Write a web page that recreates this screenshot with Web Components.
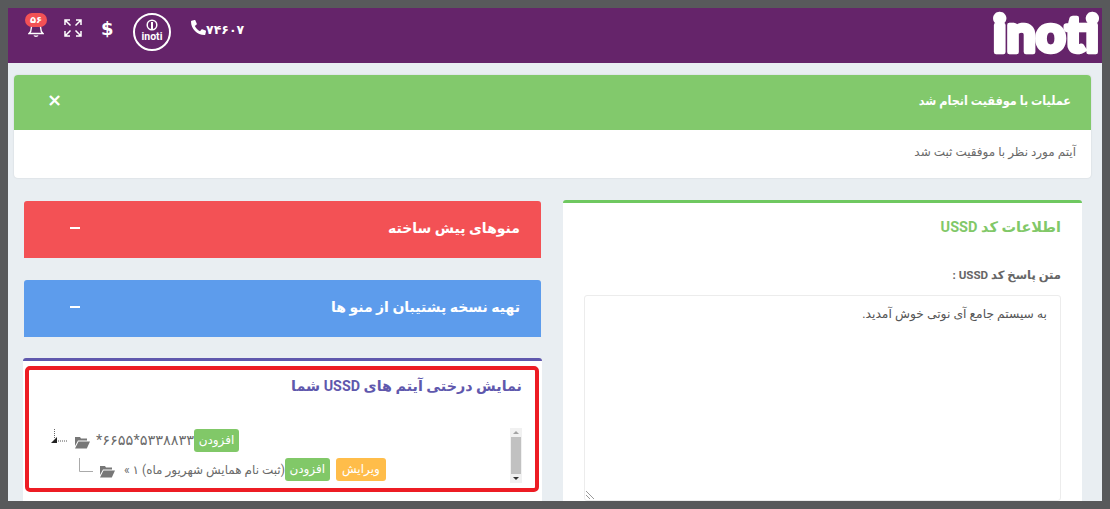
<!DOCTYPE html>
<html lang="fa">
<head>
<meta charset="utf-8">
<title>USSD</title>
<style>
html, body { margin: 0; height: 509px; overflow: hidden; }
body {
    box-sizing: border-box;
    padding: 8px;
    background: #58595b;
    font-family: Roboto, "DejaVu Sans", sans-serif;
}
</style>
</head>
<body>
<app-frame>
    <top-bar></top-bar>
    <alert-box heading="عملیات با موفقیت انجام شد">آیتم مورد نظر با موفقیت ثبت شد</alert-box>
    <two-columns>
        <div slot="left">
            <fold-panel color="#f35155" heading="منوهای پیش ساخته"></fold-panel>
            <fold-panel color="#5d9cec" heading="تهیه نسخه پشتیبان از منو ها"></fold-panel>
            <tree-card heading="نمایش درختی آیتم های USSD شما">
                <tree-row level="0" label="*۶۶۵۵*۵۳۳۸۸۳۳" actions="افزودن"></tree-row>
                <tree-row level="1" label="(ثبت نام همایش شهریور ماه) ۱ »" actions="افزودن,ویرایش"></tree-row>
            </tree-card>
        </div>
        <ussd-form slot="right"></ussd-form>
    </two-columns>
</app-frame>

<script>
class AppFrame extends HTMLElement {
    constructor() {
        super();
        this.shadowDOM = this.attachShadow({mode: "open"});
    }
    connectedCallback() {
        this.shadowDOM.innerHTML = `
        <style>
        :host {
            display: block;
            width: 1094px;
            height: 493px;
            background: #e9eef2;
        }
        </style>
        <slot></slot>`;
    }
}

class TopBar extends HTMLElement {
    constructor() {
        super();
        this.shadowDOM = this.attachShadow({mode: "open"});
    }
    connectedCallback() {
        this.shadowDOM.innerHTML = `
        <style>
        :host {
            display: flex;
            align-items: flex-start;
            height: 55px;
            background: #65246a;
            color: #fff;
            font-family: Roboto, "DejaVu Sans", sans-serif;
        }
        .bell { position: relative; margin: 10px 0 0 20px; width: 16px; height: 20px; }
        .badge {
            position: absolute;
            left: -3px;
            top: -5px;
            width: 22px;
            height: 14px;
            border-radius: 7px;
            background: #f35155;
            font: bold 10px/14px "DejaVu Sans", sans-serif;
            text-align: center;
        }
        .expand { margin: 11px 0 0 20px; }
        .dollar { margin: 9px 0 0 19px; width: 12px; font: bold 18px/24px "DejaVu Sans", sans-serif; text-align: center; }
        .round {
            box-sizing: border-box;
            margin: 5px 0 0 20px;
            width: 38px;
            height: 38px;
            border: 2px solid #fff;
            border-radius: 50%;
            display: flex;
            flex-direction: column;
            align-items: center;
            font: bold 10.500px/11px Roboto, sans-serif;
        }
        .round svg { margin-top: 4px; }
        .phone { margin: 12px 0 0 20px; }
        .tel { margin: 13px 0 0 0; font: bold 12.500px/18px "DejaVu Sans", sans-serif; }
        .logo { margin-left: auto; display: block; overflow: visible; }
        .logo text { font: 900 52px Lato, sans-serif; }
        </style>
        <div class="bell">
            <svg width="16" height="20" viewBox="0 0 16 20" fill="none" stroke="#fff" stroke-width="1.400">
                <path d="M1 15.500c2-1.500 2.300-3 2.300-5.500 0-2.500 2-4 4.700-4s4.700 1.500 4.700 4c0 2.500.3 4 2.300 5.500z"/>
                <path d="M6 17.500c.6 1 3.400 1 4 0"/>
            </svg>
            <div class="badge">۵۶</div>
        </div>
        <svg class="expand" width="18" height="18" viewBox="0 0 18 18" fill="none" stroke="#fff" stroke-width="1.500">
            <path d="M1 6V1h5M1 1l5.500 5.500M12 1h5v5M17 1l-5.500 5.500M1 12v5h5M1 17l5.500-5.500M12 17h5v-5M17 17l-5.500-5.500"/>
        </svg>
        <div class="dollar">$</div>
        <div class="round">
            <svg width="12" height="12" viewBox="0 0 12 12" fill="none" stroke="#fff" stroke-width="1.500">
                <circle cx="6" cy="6" r="4.800"/><path d="M6 3v7" stroke-width="2"/>
            </svg>
            <span>inoti</span>
        </div>
        <svg class="phone" width="15" height="15" viewBox="0 0 512 512" fill="#fff">
            <path transform="matrix(-1 0 0 1 512 0)" d="M493.400 24.600l-104-24c-11.300-2.600-22.900 3.300-27.500 13.900l-48 112c-4.200 9.800-1.400 21.300 6.900 28l60.600 49.600c-36 76.700-98.900 140.500-177.200 177.200l-49.600-60.600c-6.800-8.300-18.200-11.100-28-6.900l-112 48C3.900 366.500-2 378.100.6 389.400l24 104C27.100 504.200 36.700 512 48 512c256.100 0 464-207.500 464-464 0-11.200-7.700-20.900-18.600-23.400z"/>
        </svg>
        <div class="tel">۷۴۶۰۷</div>
        <svg class="logo" width="110" height="55" viewBox="0 0 110 55">
            <text x="1" y="43.500" fill="#fff" stroke="#fff" stroke-width="4.500" stroke-linejoin="round" textLength="106" lengthAdjust="spacingAndGlyphs">inoti</text>
        </svg>`;
    }
}

class AlertBox extends HTMLElement {
    constructor() {
        super();
        this.shadowDOM = this.attachShadow({mode: "open"});
    }
    connectedCallback() {
        this.shadowDOM.innerHTML = `
        <style>
        :host {
            display: block;
            margin: 12px 11px 22px 6px;
            background: #fff;
            border-radius: 4px;
            overflow: hidden;
            box-shadow: 0 0 2px rgba(0,0,0,.12);
            font-family: Roboto, "DejaVu Sans", sans-serif;
        }
        header {
            display: flex;
            align-items: center;
            justify-content: space-between;
            box-sizing: border-box;
            height: 55px;
            padding: 0 20px 5px 34px;
            background: #82c96c;
            color: #fff;
        }
        h3 { margin: 0; font: bold 12.500px "DejaVu Sans Condensed", "DejaVu Sans", sans-serif; font-stretch: condensed; word-spacing: -1px; direction: rtl; }
        .close { font: bold 18px/18px "DejaVu Sans", sans-serif; margin-left: -1px; }
        p {
            margin: 0;
            height: 48px;
            padding: 0 15px;
            direction: rtl;
            font-size: 12px;
            line-height: 44px;
            color: #6a6a6a;
        }
        </style>
        <header><span class="close">×</span><h3>${this.getAttribute("heading")}</h3></header>
        <p><slot></slot></p>`;
    }
}

class TwoColumns extends HTMLElement {
    constructor() {
        super();
        this.shadowDOM = this.attachShadow({mode: "open"});
    }
    connectedCallback() {
        this.shadowDOM.innerHTML = `
        <style>
        :host {
            display: grid;
            grid-template-columns: 519px 519px;
            column-gap: 21px;
            padding: 0 20px 0 15px;
            align-items: start;
        }
        </style>
        <slot name="left"></slot>
        <slot name="right"></slot>`;
    }
}

class FoldPanel extends HTMLElement {
    constructor() {
        super();
        this.shadowDOM = this.attachShadow({mode: "open"});
    }
    connectedCallback() {
        const color = this.getAttribute("color");
        this.shadowDOM.innerHTML = `
        <style>
        :host {
            display: flex;
            align-items: center;
            justify-content: space-between;
            box-sizing: border-box;
            height: 57px;
            margin: 1px 1px 22px;
            padding: 0 21px 3px 46px;
            border-radius: 3px 3px 0 0;
            background: ${color};
            color: #fff;
            font-family: Roboto, "DejaVu Sans", sans-serif;
        }
        h3 { margin: 0; font-size: 14px; font-weight: bold; direction: rtl; }
        .dash { width: 10px; height: 2px; background: #fff; }
        </style>
        <span class="dash"></span><h3>${this.getAttribute("heading")}</h3>`;
    }
}

class TreeCard extends HTMLElement {
    constructor() {
        super();
        this.shadowDOM = this.attachShadow({mode: "open"});
    }
    connectedCallback() {
        this.shadowDOM.innerHTML = `
        <style>
        :host {
            display: block;
            position: relative;
            box-sizing: border-box;
            height: 143px;
            margin-top: -1px;
            background: #fff;
            border-top: 3px solid #5f58ad;
            border-radius: 3px 3px 0 0;
            font-family: Roboto, "DejaVu Sans", sans-serif;
        }
        h3 {
            margin: 0;
            padding: 15px 20px 0 0;
            direction: rtl;
            font-size: 14.300px;
            line-height: 20px;
            font-weight: bold;
            color: #5f58ad;
        }
        .box {
            display: flex;
            justify-content: space-between;
            margin: 32px 20px 0 27px;
            height: 55px;
        }
        .rows { padding-top: 1px; }
        .bar {
            width: 12px;
            height: 55px;
            background: #f1f1f1;
            display: flex;
            flex-direction: column;
            align-items: center;
            justify-content: space-between;
        }
        .arrow { width: 0; height: 0; border: 3px solid transparent; margin: 3px 0; }
        .up { border-bottom-color: #a3a3a3; border-top: 0; }
        .down { border-top-color: #333; border-bottom: 0; }
        .thumb { width: 10px; flex: 1; background: #c1c1c1; margin: 0 1px; }
        /* annotation drawn on top of the card */
        .mark {
            position: absolute;
            left: 2px;
            right: 3px;
            top: 5px;
            height: 126px;
            box-sizing: border-box;
            border: 4px solid #ed1c24;
            border-radius: 5px;
            pointer-events: none;
        }
        </style>
        <h3>${this.getAttribute("heading")}</h3>
        <div class="box">
            <div class="rows"><slot></slot></div>
            <div class="bar"><i class="arrow up"></i><div class="thumb"></div><i class="arrow down"></i></div>
        </div>
        <div class="mark"></div>`;
    }
}

class TreeRow extends HTMLElement {
    constructor() {
        super();
        this.shadowDOM = this.attachShadow({mode: "open"});
    }
    connectedCallback() {
        const level = Number(this.getAttribute("level"));
        const line = level === 0
            ? `<svg class="line" width="24" height="24" viewBox="0 0 24 24">
                 <path d="M4.500 0v10" stroke="#666" stroke-dasharray="1 1" fill="none"/>
                 <path d="M8 12h9" stroke="#555" stroke-dasharray="1 1" fill="none"/>
                 <path d="M1 14l6-6v6z" fill="#222"/>
               </svg>`
            : `<svg class="line" width="24" height="24" viewBox="0 0 24 24">
                 <path d="M4.500 0v13.500H18" stroke="#aaa" fill="none"/>
               </svg>`;
        const buttons = this.getAttribute("actions").split(",").map(name => {
            const edit = name === "ویرایش";
            return `<action-tag color="${edit ? "#ffbd4a" : "#81c868"}" pad="${edit ? 6.5 : 4.5}">${name}</action-tag>`;
        }).join("");
        this.shadowDOM.innerHTML = `
        <style>
        :host {
            display: flex;
            align-items: center;
            height: 23px;
            margin-bottom: 6px;
            margin-left: ${level * 25}px;
            font-family: Roboto, "DejaVu Sans", sans-serif;
            font-size: 12px;
            color: #6a6a6a;
        }
        .line { flex: none; }
        .folder { flex: none; margin: 3px ${level ? 9 : 6}px 0 0; }
        bdi { white-space: nowrap; ${level ? "" : "font-size: 14.500px;"} }
        </style>
        ${line}
        <svg class="folder" width="16" height="13" viewBox="0 0 16 13">
            <path fill="#777" d="M1 1h5l1 1.500h6v2H4L1 10z"/>
            <path fill="#777" d="M4.500 5.500H16L12.800 12.500H1z"/>
        </svg>
        <bdi dir="${level ? "rtl" : "ltr"}">${this.getAttribute("label")}</bdi>
        ${buttons}`;
    }
}

class ActionTag extends HTMLElement {
    constructor() {
        super();
        this.shadowDOM = this.attachShadow({mode: "open"});
    }
    connectedCallback() {
        this.shadowDOM.innerHTML = `
        <style>
        :host {
            display: block;
            flex: none;
            height: 23px;
            padding: 0 ${this.getAttribute("pad")}px;
            margin-right: 6px;
            border-radius: 3px;
            background: ${this.getAttribute("color")};
            color: #fff;
            font-size: 12px;
            line-height: 22px;
            direction: rtl;
        }
        :host(:last-child) { margin-right: 0; }
        </style>
        <slot></slot>`;
    }
}

class UssdForm extends HTMLElement {
    constructor() {
        super();
        this.shadowDOM = this.attachShadow({mode: "open"});
    }
    connectedCallback() {
        this.shadowDOM.innerHTML = `
        <style>
        :host {
            display: block;
            box-sizing: border-box;
            height: 301px;
            padding: 15px 21px 0;
            background: #fff;
            border-top: 3px solid #6fc860;
            border-radius: 3px 3px 0 0;
            direction: rtl;
            font-family: Roboto, "DejaVu Sans", sans-serif;
        }
        h3 { margin: 0; font-size: 14.500px; line-height: 20px; font-weight: bold; color: #81c868; }
        label { display: block; margin-top: 27px; font-size: 11.600px; line-height: 20px; font-weight: bold; color: #666; }
        .area {
            position: relative;
            box-sizing: border-box;
            height: 206px;
            margin-top: 10px;
            padding: 10px 13px;
            border: 1px solid #ececec;
            border-radius: 3px;
            font-size: 12.300px;
            line-height: 16px;
            color: #555;
        }
        .grip { position: absolute; left: 1px; bottom: 1px; }
        </style>
        <h3>اطلاعات کد USSD</h3>
        <label>متن پاسخ کد USSD :</label>
        <div class="area">به سیستم جامع آی نوتی خوش آمدید.
            <svg class="grip" width="8" height="8" viewBox="0 0 8 8" stroke="#999" fill="none"><path d="M0 0l8 8M0 4l4 4"/></svg>
        </div>`;
    }
}

customElements.define("app-frame", AppFrame);
customElements.define("top-bar", TopBar);
customElements.define("alert-box", AlertBox);
customElements.define("two-columns", TwoColumns);
customElements.define("fold-panel", FoldPanel);
customElements.define("tree-card", TreeCard);
customElements.define("tree-row", TreeRow);
customElements.define("action-tag", ActionTag);
customElements.define("ussd-form", UssdForm);
</script>
</body>
</html>
